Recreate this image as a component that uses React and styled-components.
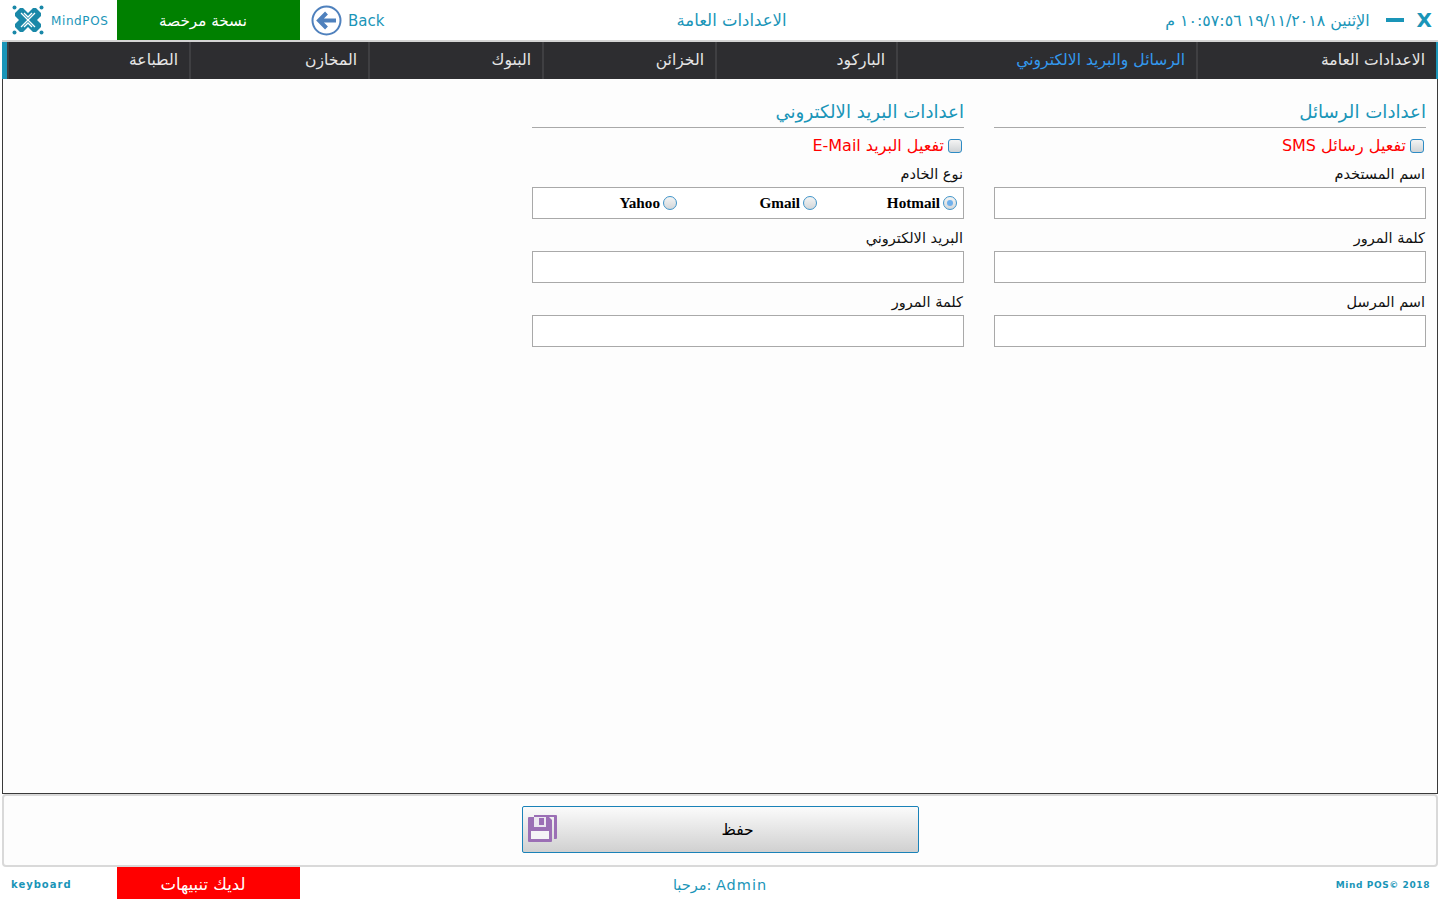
import styled, { createGlobalStyle } from "styled-components";

const Global = createGlobalStyle`
  html, body { margin: 0; padding: 0; background: #fff; }
  body { font-family: "DejaVu Sans", sans-serif; }
  * { box-sizing: border-box; }
`;

const Page = styled.div`
  width: 1440px;
  height: 899px;
  display: flex;
  flex-direction: column;
  overflow: hidden;
  background: #fff;
`;

const TopBar = styled.header`
  height: 40px;
  display: flex;
  align-items: stretch;
  color: #1a95b8;
`;

const BarLabel = styled.span`
  padding-top: 2px;
`;

const Brand = styled.div`
  width: 117px;
  display: flex;
  align-items: center;
  padding-left: 12px;
  gap: 7px;
  font-size: 12px;
  letter-spacing: 0.6px;
`;

const Badge = styled.div`
  width: 183px;
  display: flex;
  align-items: center;
  justify-content: center;
  padding: 2px 11px 0 0;
  color: #fff;
  font-size: ${(p) => p.$size}px;
  background: ${(p) => p.$bg};
`;

const Back = styled.div`
  width: 300px;
  display: flex;
  align-items: center;
  padding-left: 11px;
  gap: 6px;
  font-size: 15px;
`;

const PageTitle = styled.div`
  width: 365px;
  text-align: center;
  align-self: center;
  font-size: 16.5px;
  margin-left: -51px;
`;

const WindowBox = styled.div`
  flex: 1;
  display: flex;
  align-items: center;
  justify-content: flex-end;
  padding-right: 8px;
`;

const Clock = styled.div`
  font-size: 15.8px;
  direction: rtl;
  white-space: nowrap;
  margin-right: 16px;
`;

const MinBtn = styled.div`
  width: 18px;
  height: 4px;
  background: #1a95b8;
  margin-right: 13px;
`;

const CloseBtn = styled.div`
  font-size: 20px;
  font-weight: 700;
  line-height: 1;
`;

const Shell = styled.div`
  flex: 1;
  margin: 0 2px;
  border-top: 2px solid #d4d4d4;
  display: flex;
  flex-direction: column;
  min-height: 0;
`;

const Tabs = styled.nav`
  height: 37px;
  flex: none;
  display: flex;
  direction: rtl;
  background: #2d2d30;
  border-right: 2px solid #1a95b8;
  border-left: 5px solid #1a95b8;
`;

const Tab = styled.div`
  width: ${(p) => p.$w}px;
  flex: none;
  padding: 0 11px 1px 0;
  display: flex;
  align-items: center;
  font-size: 15.6px;
  white-space: nowrap;
  color: ${(p) => (p.$active ? "#3399ee" : "#e6e6e6")};
  border-left: 2px solid #3f3f42;
`;

const Content = styled.main`
  flex: 1;
  min-height: 0;
  background: #fdfdfd;
  border: 1px solid #3a3a3a;
  border-top: 0;
  padding: 21px 11px 0 0;
  display: flex;
  direction: rtl;
  gap: 30px;
`;

const Section = styled.section`
  width: 432px;
`;

const SectionTitle = styled.h2`
  margin: 0;
  height: 28px;
  font-size: 18.2px;
  font-weight: 400;
  line-height: 24px;
  color: #1a95b8;
  border-bottom: 1px solid #a9a9a9;
`;

const CheckRow = styled.label`
  height: 33px;
  display: flex;
  align-items: center;
  gap: 4px;
  padding: 2px 2px 0 0;
  font-size: 16px;
  color: #f00;
`;

const Box = styled.span`
  width: 14px;
  height: 14px;
  border: 1px solid #2e8bc4;
  border-radius: 3px;
  background: linear-gradient(#f4f4f4, #cfd3d6);
`;

const FieldLabel = styled.div`
  height: 26px;
  padding: 5px 1px 0 0;
  font-size: 14.5px;
  line-height: 17px;
  color: #111;
`;

const TextInput = styled.div`
  height: 32px;
  border: 1px solid #a9a9a9;
  background: #fff;
  margin-bottom: 6px;
`;

const RadioGroup = styled(TextInput)`
  display: flex;
  align-items: center;
  direction: rtl;
  padding-right: 6px;
  font-family: "Liberation Serif", serif;
  font-weight: 700;
  font-size: 15.2px;
  color: #000;
`;

const RadioItem = styled.div`
  width: ${(p) => p.$w}px;
  display: flex;
  align-items: center;
  gap: 3px;
`;

const Dot = styled.span`
  width: 14px;
  height: 14px;
  border-radius: 50%;
  border: 1px solid #3f94c9;
  background: linear-gradient(#f4f4f4, #d3d6d9);
  display: flex;
  align-items: center;
  justify-content: center;
  &::after {
    content: "";
    display: ${(p) => (p.$on ? "block" : "none")};
    width: 6px;
    height: 6px;
    border-radius: 50%;
    background: #6fb0ec;
  }
`;

const Actions = styled.div`
  height: 73px;
  flex: none;
  border: 2px solid #d9d9d9;
  border-radius: 4px;
  background: #fdfdfd;
  display: flex;
  align-items: flex-start;
  padding: 10px 0 0 518px;
`;

const SaveButton = styled.button`
  position: relative;
  width: 397px;
  height: 47px;
  padding: 0 0 0 34px;
  border: 1px solid #1a82b8;
  border-radius: 2px;
  background: linear-gradient(#fbfbfb, #d0d0d0);
  font-family: inherit;
  font-size: 15.5px;
  color: #000;
`;

const SaveIcon = styled.svg`
  position: absolute;
  left: 5px;
  top: 8px;
`;

const BottomBar = styled.footer`
  height: 32px;
  flex: none;
  display: flex;
  align-items: stretch;
  color: #1a95b8;
`;

const Keyboard = styled.div`
  width: 117px;
  padding: 12px 0 0 11px;
  font-size: 10px;
  font-weight: 700;
  letter-spacing: 1px;
`;

const Welcome = styled.div`
  width: 840px;
  text-align: center;
  align-self: center;
  padding-top: 3px;
  font-size: 14.5px;
  letter-spacing: 1px;
`;

const Copy = styled.div`
  flex: 1;
  align-self: center;
  text-align: right;
  padding: 3px 10px 0 0;
  font-size: 9px;
  font-weight: 700;
  letter-spacing: 0.6px;
`;

const tabs = [
  { label: "الاعدادات العامة", w: 240 },
  { label: "الرسائل والبريد الالكتروني", w: 300, active: true },
  { label: "الباركود", w: 181 },
  { label: "الخزائن", w: 173 },
  { label: "البنوك", w: 174 },
  { label: "المخازن", w: 179 },
  { label: "الطباعة", w: 182 },
];

const Logo = () => (
  <svg width="32" height="30" viewBox="0 0 32 30">
    <g fill="#1a88a8">
      <path d="M16 8 L11 3 L8 3 L3 8 L3 11 L7 15 L3 19 L3 22 L8 27 L11 27 L16 22 L21 27 L24 27 L29 22 L29 19 L25 15 L29 11 L29 8 L24 3 L21 3 Z" />
      <circle cx="2.5" cy="2.5" r="2" />
      <circle cx="29.5" cy="2.5" r="2" />
      <circle cx="2.5" cy="27.5" r="2" />
      <circle cx="29.5" cy="27.5" r="2" />
    </g>
    <g fill="none" stroke="#fff" strokeWidth="1.3">
      <path d="M9 8 L23 22" />
      <path d="M23 8 L9 22" />
      <path d="M12 8 L16 12 L20 8" />
      <path d="M12 22 L16 18 L20 22" />
    </g>
  </svg>
);

const BackIcon = () => (
  <svg width="31" height="31" viewBox="0 0 31 31">
    <circle cx="15.5" cy="15.5" r="14" fill="#fff" stroke="#4f81bd" strokeWidth="2" />
    <path d="M25 15.5 H9 M15.5 8 L8 15.5 L15.5 23" fill="none" stroke="#4f81bd" strokeWidth="4" />
  </svg>
);

const FloppyIcon = () => (
  <SaveIcon width="29" height="27" viewBox="0 0 29 27">
    <path d="M6 0 H28 a1 1 0 0 1 1 1 V23 a1 1 0 0 1 -1 1 H26 V2 H6 Z" fill="#9b6fb5" />
    <path d="M1 2 H21 L24 5 V26 a1 1 0 0 1 -1 1 H1 a1 1 0 0 1 -1 -1 V3 a1 1 0 0 1 1 -1 Z" fill="#9b6fb5" />
    <rect x="6" y="2" width="12" height="10" fill="#ece7f0" />
    <rect x="11" y="3" width="5" height="7" fill="#9b6fb5" />
    <rect x="3" y="16" width="18" height="8" fill="#f4f2f6" />
  </SaveIcon>
);

const Field = ({ label }) => (
  <>
    <FieldLabel>{label}</FieldLabel>
    <TextInput />
  </>
);

export default function App() {
  return (
    <Page>
      <Global />
      <TopBar>
        <Brand>
          <Logo />
          <BarLabel>MindPOS</BarLabel>
        </Brand>
        <Badge $bg="#008000" $size={15.2}>نسخة مرخصة</Badge>
        <Back>
          <BackIcon />
          <BarLabel>Back</BarLabel>
        </Back>
        <PageTitle>الاعدادات العامة</PageTitle>
        <WindowBox>
          <Clock>الإثنين ١٩/١١/٢٠١٨ ١٠:٥٧:٥٦ م</Clock>
          <MinBtn />
          <CloseBtn>X</CloseBtn>
        </WindowBox>
      </TopBar>

      <Shell>
        <Tabs>
          {tabs.map((t) => (
            <Tab key={t.label} $w={t.w} $active={t.active}>
              {t.label}
            </Tab>
          ))}
        </Tabs>
        <Content>
          <Section>
            <SectionTitle>اعدادات الرسائل</SectionTitle>
            <CheckRow>
              <Box />
              <span>تفعيل رسائل SMS</span>
            </CheckRow>
            <Field label="اسم المستخدم" />
            <Field label="كلمة المرور" />
            <Field label="اسم المرسل" />
          </Section>
          <Section>
            <SectionTitle>اعدادات البريد الالكتروني</SectionTitle>
            <CheckRow>
              <Box />
              <span>تفعيل البريد E-Mail</span>
            </CheckRow>
            <FieldLabel>نوع الخادم</FieldLabel>
            <RadioGroup>
              <RadioItem $w={140}>
                <Dot $on />
                <span>Hotmail</span>
              </RadioItem>
              <RadioItem $w={140}>
                <Dot />
                <span>Gmail</span>
              </RadioItem>
              <RadioItem $w={140}>
                <Dot />
                <span>Yahoo</span>
              </RadioItem>
            </RadioGroup>
            <Field label="البريد الالكتروني" />
            <Field label="كلمة المرور" />
          </Section>
        </Content>
        <Actions>
          <SaveButton>
            <FloppyIcon />
            حفظ
          </SaveButton>
        </Actions>
      </Shell>

      <BottomBar>
        <Keyboard>keyboard</Keyboard>
        <Badge $bg="#ff0000" $size={16.5}>لديك تنبيهات</Badge>
        <Welcome>مرحبا: Admin</Welcome>
        <Copy>Mind POS© 2018</Copy>
      </BottomBar>
    </Page>
  );
}
